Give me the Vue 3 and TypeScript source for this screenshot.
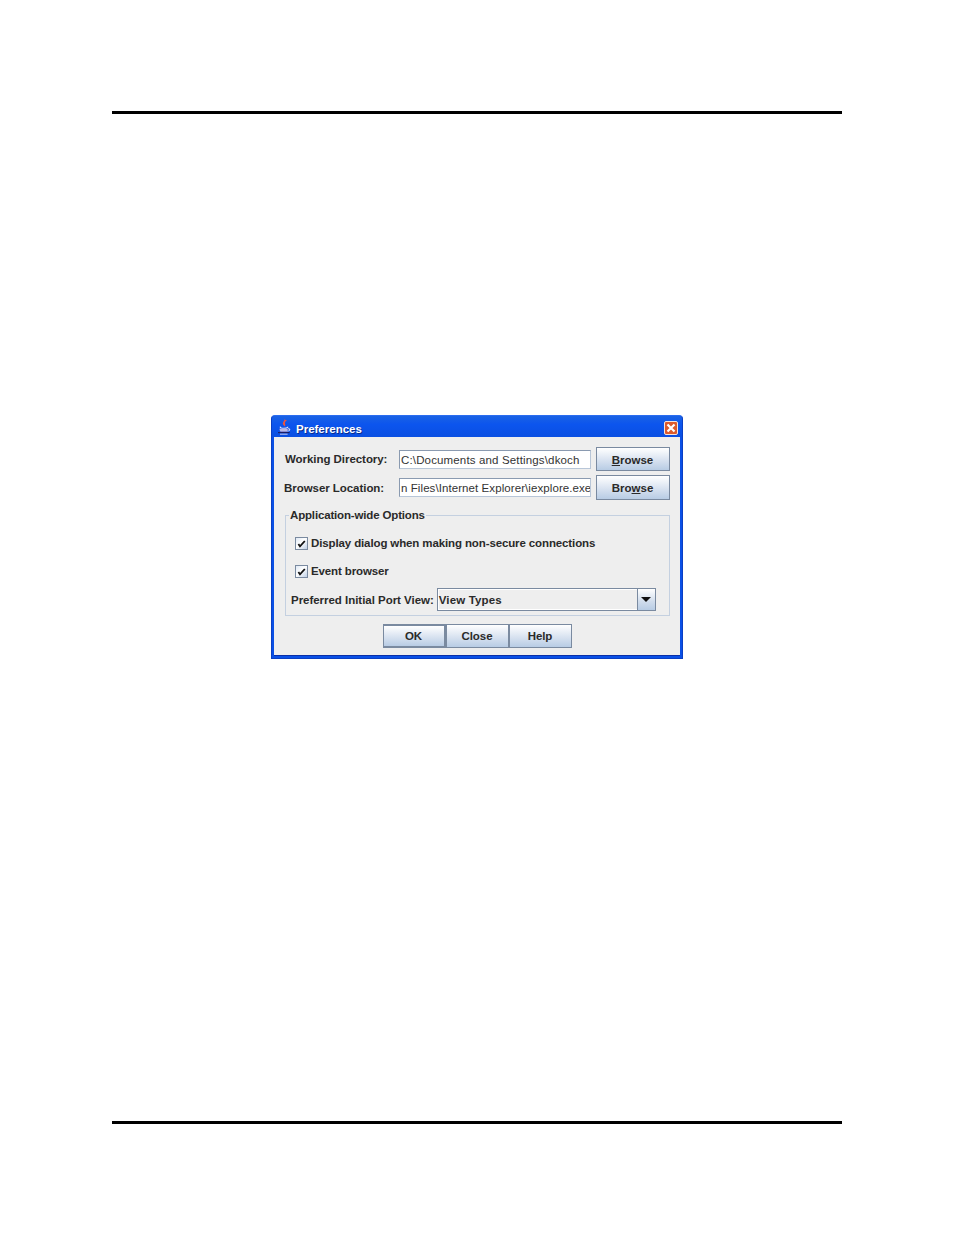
<script setup lang="ts">
const rows = [
  { label: 'Working Directory:', value: 'C:\\Documents and Settings\\dkoch', pre: '', u: 'B', post: 'rowse', cls: 'first' },
  { label: 'Browser Location:', value: 'n Files\\Internet Explorer\\iexplore.exe', pre: 'Bro', u: 'w', post: 'se', cls: 'second' },
]
const footer = ['OK', 'Close', 'Help']
</script>

<template>
  <div class="page">
    <div class="rule"></div>
    <div class="dialog">
      <div class="titlebar">
        <svg class="java" width="14" height="17" viewBox="0 0 14 17">
          <path d="M7.5 0.5C8.5 2.5 5 4 6 6.2C6.5 7.2 7.5 7.6 7.5 8.6C9.4 7 7.2 5.5 8.2 4C8.8 3 10 2.6 10 2C8.5 2.6 8 1.5 7.5 0.5Z" fill="#f0553a" />
          <path d="M3.5 8.6C2.5 9.8 5 10.3 7 10.3C9 10.3 10.8 9.8 10.8 8.8" fill="none" stroke="#e4e4fa" stroke-width="1.1" />
          <path d="M2 10.8H11.2L10 14H3.5Z" fill="#8a8ad0" />
          <path d="M3 12H10.4" stroke="#e8e8fa" stroke-width="1" />
          <path d="M11 10.8C13.4 10.4 13.4 13 10.4 13.2" fill="none" stroke="#d8d8f2" stroke-width="1.1" />
          <path d="M1 14.6H12.6" stroke="#1c1c60" stroke-width="1.1" />
          <path d="M3 16.2H10.6" stroke="#c8c8ee" stroke-width="1" />
        </svg>
        <span class="title">Preferences</span>
        <span class="close">
          <svg width="10" height="10" viewBox="0 0 10 10"><path d="M1.5 1.5L8.5 8.5M8.5 1.5L1.5 8.5" stroke="#fff" stroke-width="2.2" /></svg>
        </span>
      </div>
      <div class="body">
        <div v-for="r in rows" :key="r.label" class="row" :class="r.cls">
          <span class="label">{{ r.label }}</span>
          <span class="field">{{ r.value }}</span>
          <button class="btn browse">{{ r.pre }}<u>{{ r.u }}</u>{{ r.post }}</button>
        </div>
        <fieldset class="group">
          <legend>Application-wide Options</legend>
          <label class="check c1">
            <span class="box"><svg width="11" height="11" viewBox="0 0 11 11"><path d="M2.4 6L4 8.4L8.8 3" fill="none" stroke="#111" stroke-width="1.8" /></svg></span>Display dialog when making non-secure connections
          </label>
          <label class="check c2">
            <span class="box"><svg width="11" height="11" viewBox="0 0 11 11"><path d="M2.4 6L4 8.4L8.8 3" fill="none" stroke="#111" stroke-width="1.8" /></svg></span>Event browser
          </label>
          <div class="portrow">
            <span>Preferred Initial Port View:</span>
            <div class="combo">
              <span class="comboval">View Types</span>
              <span class="arrow"><i></i></span>
            </div>
          </div>
        </fieldset>
        <div class="footer">
          <button v-for="(b, i) in footer" :key="b" class="btn foot" :class="{ primary: i === 0 }">{{ b }}</button>
        </div>
      </div>
    </div>
    <div class="rule bottom"></div>
  </div>
</template>

<style>
html, body { margin: 0; background: #fff; }
</style>

<style scoped>
.page {
  width: 954px;
  height: 1235px;
  padding-top: 111px;
  box-sizing: border-box;
  display: flex;
  flex-direction: column;
  align-items: flex-start;
  font-family: "Liberation Sans", Arial, sans-serif;
  overflow: hidden;
}
.rule { width: 730px; height: 3px; margin-left: 112px; background: #000; flex: none; }
.rule.bottom { margin-top: 462px; }
.dialog {
  margin: 301px 0 0 271px;
  width: 412px;
  height: 244px;
  box-sizing: border-box;
  border: 1px solid #0a3fc4;
  border-top-color: #2a6cf0;
  border-radius: 4px 4px 0 0;
  background: #0a50e6;
  padding: 0 2px 2px;
  display: flex;
  flex-direction: column;
  flex: none;
}
.titlebar {
  height: 21px;
  margin: 0 -2px;
  padding: 0 4px 0 5px;
  display: flex;
  align-items: center;
  flex: none;
  border-radius: 3px 3px 0 0;
  background: linear-gradient(#1a62e4, #0c55ee 40%, #0a4fe2);
}
.java { flex: none; margin-top: -1px; }
.title {
  margin-left: 5px;
  margin-top: 5px;
  color: #fff;
  font-size: 11.5px;
  font-weight: 700;
  text-shadow: 1px 1px 0 #0a2c8c;
}
.close {
  margin-left: auto;
  margin-top: 2px;
  width: 14px;
  height: 14px;
  box-sizing: border-box;
  border: 1px solid #f4e4dc;
  border-radius: 2px;
  background: #dc5a2c;
  display: flex;
  align-items: center;
  justify-content: center;
}
.body {
  flex: 1;
  background: #eeeeee;
  border-bottom: 1px solid #0a2fa8;
  padding: 10px 10px 0 11px;
  color: #2a2a2a;
  font-size: 11.5px;
  font-weight: 700;
  box-sizing: border-box;
}
.row { display: flex; align-items: center; height: 24px; }
.row.second { margin-top: 4px; height: 25px; }
.label { width: 114px; flex: none; letter-spacing: -0.05px; }
.row.second .label { margin-left: -1px; width: 115px; letter-spacing: -0.05px; }
.field {
  width: 192px;
  height: 19px;
  box-sizing: border-box;
  border: 1px solid #8a9ab0;
  border-right-color: #b8c6d8;
  border-bottom-color: #b8c6d8;
  background: #fff;
  padding-left: 1px;
  font-weight: 400;
  font-size: 11.5px;
  line-height: 18px;
  white-space: nowrap;
  overflow: hidden;
  letter-spacing: 0.15px;
  color: #333;
}
.row.second .field { letter-spacing: 0.08px; }
.btn {
  font: inherit;
  color: #2a2a2a;
  border: 1px solid #7a8aa0;
  background: linear-gradient(#ffffff, #d8e2f0 55%, #b8cce4);
  padding: 0;
  margin: 0;
  box-sizing: border-box;
}
.browse { width: 74px; height: 100%; margin-left: 5px; padding-right: 1px; }
.row.first .browse { padding-top: 1px; }
.group {
  margin: 8px 0 0;
  padding: 0;
  width: 385px;
  height: 108px;
  box-sizing: border-box;
  border: 1px solid #c4d0e0;
}
legend { margin-left: 3px; padding: 0 1px; line-height: 14px; letter-spacing: -0.16px; }
.check { display: flex; align-items: center; margin-left: 9px; height: 14px; letter-spacing: -0.12px; }
.check.c1 { margin-top: 14px; }
.check.c2 { margin-top: 14px; }
.box {
  width: 13px;
  height: 13px;
  flex: none;
  box-sizing: border-box;
  border: 1px solid #7a8aa0;
  background: linear-gradient(135deg, #dfe8f4, #ffffff 45%, #c0d0e6);
  margin-right: 3px;
  display: flex;
}
.portrow { display: flex; align-items: center; margin: 10px 0 0 5px; height: 23px; letter-spacing: -0.03px; }
.combo {
  margin-left: 3px;
  width: 219px;
  height: 23px;
  box-sizing: border-box;
  border: 1px solid #7a8aa0;
  display: flex;
  background: #eeeeee;
}
.comboval { flex: 1; padding-left: 0; line-height: 21px; border: 1px solid #fff; border-right: 0; letter-spacing: 0.15px; }
.arrow {
  width: 17px;
  border-left: 1px solid #7a8aa0;
  background: linear-gradient(#ffffff, #d0dcec 60%, #b8cce4);
  display: flex;
  align-items: center;
  justify-content: center;
}
.arrow i { width: 0; height: 0; border: 5px solid transparent; border-top: 5px solid #111; border-bottom: 0; }
.footer { display: flex; justify-content: center; margin-top: 8px; }
.foot { width: 63px; height: 24px; letter-spacing: -0.05px; padding-right: 1px; }
.foot.primary { border-width: 2px 2px 2px 1px; }
</style>
